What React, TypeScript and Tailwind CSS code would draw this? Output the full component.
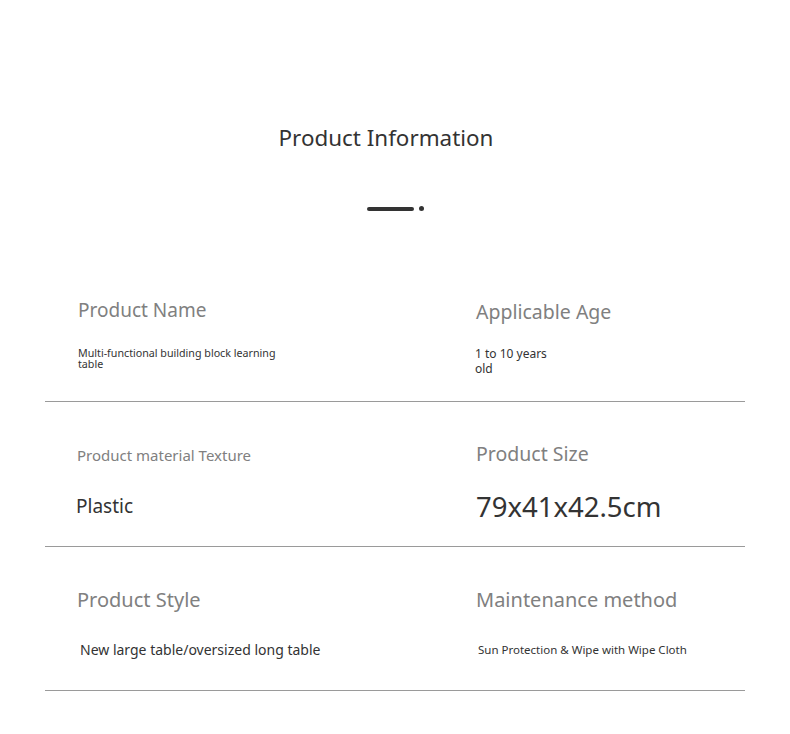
const rows = [
  [
    {
      label: 'Product Name',
      labelClass: 'text-[19px]',
      value: 'Multi-functional building block learning table',
      valueClass: 'mt-[25px] w-[215px] text-[10.7px] leading-[11px]',
    },
    {
      label: 'Applicable Age',
      labelClass: 'text-[19.5px] mt-[2px]',
      value: '1 to 10 years old',
      valueClass: 'mt-[21px] -ml-[1px] w-[80px] text-[12px] leading-[15px]',
    },
  ],
  [
    {
      label: 'Product material Texture',
      labelClass: 'text-[15px] -ml-[1px]',
      value: 'Plastic',
      valueClass: 'mt-[25px] -ml-[2px] text-[19px] leading-[26px] text-[#222]',
    },
    {
      label: 'Product Size',
      labelClass: 'text-[19.5px] -mt-[1px]',
      value: '79x41x42.5cm',
      valueClass: 'mt-[22px] text-[27.5px] leading-[36px] text-[#222]',
    },
  ],
  [
    {
      label: 'Product Style',
      labelClass: 'text-[20px] -ml-[1px]',
      value: 'New large table/oversized long table',
      valueClass: 'mt-[27px] ml-[2px] text-[14px] leading-[20px]',
    },
    {
      label: 'Maintenance method',
      labelClass: 'text-[20px]',
      value: 'Sun Protection & Wipe with Wipe Cloth',
      valueClass: 'mt-[28px] ml-[2px] text-[11.5px] leading-[18px]',
    },
  ],
]

const rowHeights = ['h-[145px]', 'h-[145px]', 'h-[144px]']

export default function App() {
  return (
    <div className="min-h-screen bg-white font-['Noto_Sans','Open_Sans',sans-serif] text-[#333]">
      <div className="pt-[123px] pr-[18px] flex flex-col items-center">
        <h1 className="text-[22.4px] leading-[30px] text-[#333]">Product Information</h1>
        <div className="mt-[53px] pl-[18px] flex items-center gap-[5px]">
          <span className="block w-[47px] h-[4px] rounded-full bg-[#333]" />
          <span className="block w-[5px] h-[5px] rounded-full bg-[#333]" />
        </div>
      </div>

      <div className="mx-auto w-[700px] mt-[46px]">
        {rows.map((row, i) => (
          <div key={i} className={`${rowHeights[i]} border-b border-[#9a9a9a] grid grid-cols-[398px_1fr] pl-[33px]`}>
            {row.map((cell, j) => (
              <div key={j} className="pt-[40px] flex flex-col items-start">
                <div className={`h-[26px] leading-[26px] whitespace-nowrap text-[#808080] ${cell.labelClass}`}>{cell.label}</div>
                <div className={`text-[#333] ${cell.valueClass}`}>{cell.value}</div>
              </div>
            ))}
          </div>
        ))}
      </div>
    </div>
  )
}
